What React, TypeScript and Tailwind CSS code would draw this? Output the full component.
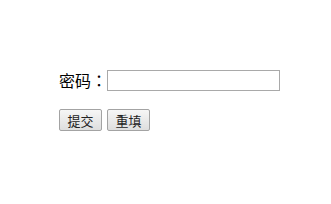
export default function App() {
  return (
    <div className="h-[204px] w-[331px] bg-white pl-[59px] pt-[70px] font-['Noto_Sans_CJK_SC',sans-serif] text-black">
      <form onSubmit={(e) => e.preventDefault()}>
        <div className="flex h-[21px] items-center">
          <label className="text-[16px] leading-[21px]">
            密码<span className="font-['Noto_Sans_CJK_JP',sans-serif]">：</span>
          </label>
          <input
            type="password"
            className="h-[21px] w-[173px] border border-[#a9a9a9] bg-white px-1 text-[13px] outline-none"
          />
        </div>
        <div className="mt-[18px] flex gap-[5px]">
          <button
            type="submit"
            className="flex h-[22px] w-[43px] items-center justify-center rounded-[2px] border border-[#a3a3a3] bg-gradient-to-b from-[#f6f6f6] to-[#dedede] text-[13px] leading-none text-[#222]"
          >
            提交
          </button>
          <button
            type="reset"
            className="flex h-[22px] w-[43px] items-center justify-center rounded-[2px] border border-[#a3a3a3] bg-gradient-to-b from-[#f6f6f6] to-[#dedede] text-[13px] leading-none text-[#222]"
          >
            重填
          </button>
        </div>
      </form>
    </div>
  );
}
